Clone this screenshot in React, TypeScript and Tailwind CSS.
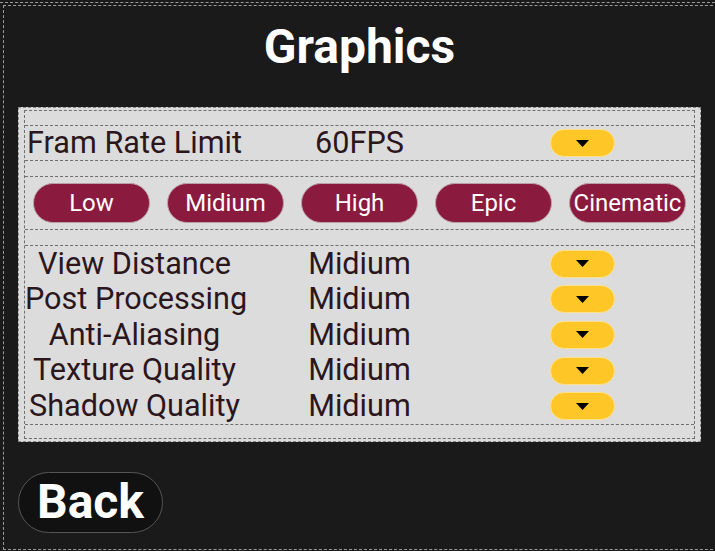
import React from "react";

function Drop() {
  return (
    <div className="flex h-[28px] w-[65px] items-center justify-center rounded-full border border-[#ffe08a] bg-[#ffc627]">
      <svg width="13" height="7" viewBox="0 0 13 7">
        <polygon points="0,0 13,0 6.5,7" fill="#000" />
      </svg>
    </div>
  );
}

const rows = [
  "View Distance",
  "Post Processing",
  "Anti-Aliasing",
  "Texture Quality",
  "Shadow Quality",
];

const presets = ["Low", "Midium", "High", "Epic", "Cinematic"];

export default function App() {
  return (
    <div
      className="h-[551px] w-full overflow-hidden bg-[#1a1a1a] pt-[2px]"
      style={{ fontFamily: "Roboto, 'Noto Sans', sans-serif" }}
    >
      <div className="border-t border-dashed border-[#9a9a9a] pt-[2px]">
        <div className="ml-[3px] h-[545px] w-[730px] border-y border-l border-dashed border-[#9a9a9a]">
          <div className="w-[711px]">
            <h1 className="mt-[17px] text-center text-[48px] font-bold leading-none text-white">
              Graphics
            </h1>
            <div className="ml-[14px] mt-[36px] w-[683px] border border-dashed border-[#8a8a8a] bg-[#dcdcdc] px-[5px] pb-[2px] pt-[2px]">
              <div className="flex flex-col gap-[15px] border border-dashed border-[#6f6f6f] pb-[13px] pt-[14px] text-[#2b161c]">
                <div className="grid h-[36px] grid-cols-3 items-center border-y border-dashed border-[#6f6f6f] text-[30.6px] leading-none">
                  <div className="whitespace-nowrap pr-[4px] text-center">Fram Rate Limit</div>
                  <div className="text-center">60FPS</div>
                  <div className="flex justify-center">
                    <Drop />
                  </div>
                </div>
                <div className="flex h-[54px] items-center justify-between border-y border-dashed border-[#6f6f6f] px-[8px]">
                  {presets.map((p) => (
                    <div
                      key={p}
                      className="flex h-[40px] w-[117px] items-center justify-center rounded-full border border-[#b9a0a8] bg-[#8b1a3f] text-[24px] leading-none text-white"
                    >
                      {p}
                    </div>
                  ))}
                </div>
                <div className="flex flex-col border-y border-dashed border-[#6f6f6f]">
                  {rows.map((r) => (
                    <div
                      key={r}
                      className="grid h-[35.6px] grid-cols-3 items-center text-[30.6px] leading-none"
                    >
                      <div className="whitespace-nowrap pr-[4px] text-center">{r}</div>
                      <div className="text-center">Midium</div>
                      <div className="flex justify-center">
                        <Drop />
                      </div>
                    </div>
                  ))}
                </div>
              </div>
            </div>
            <div className="ml-[14px] mt-[30px] flex h-[61px] w-[145px] items-center justify-center rounded-full border border-[#555] bg-[#111] text-[48px] font-bold leading-none text-white">
              Back
            </div>
          </div>
        </div>
      </div>
    </div>
  );
}
